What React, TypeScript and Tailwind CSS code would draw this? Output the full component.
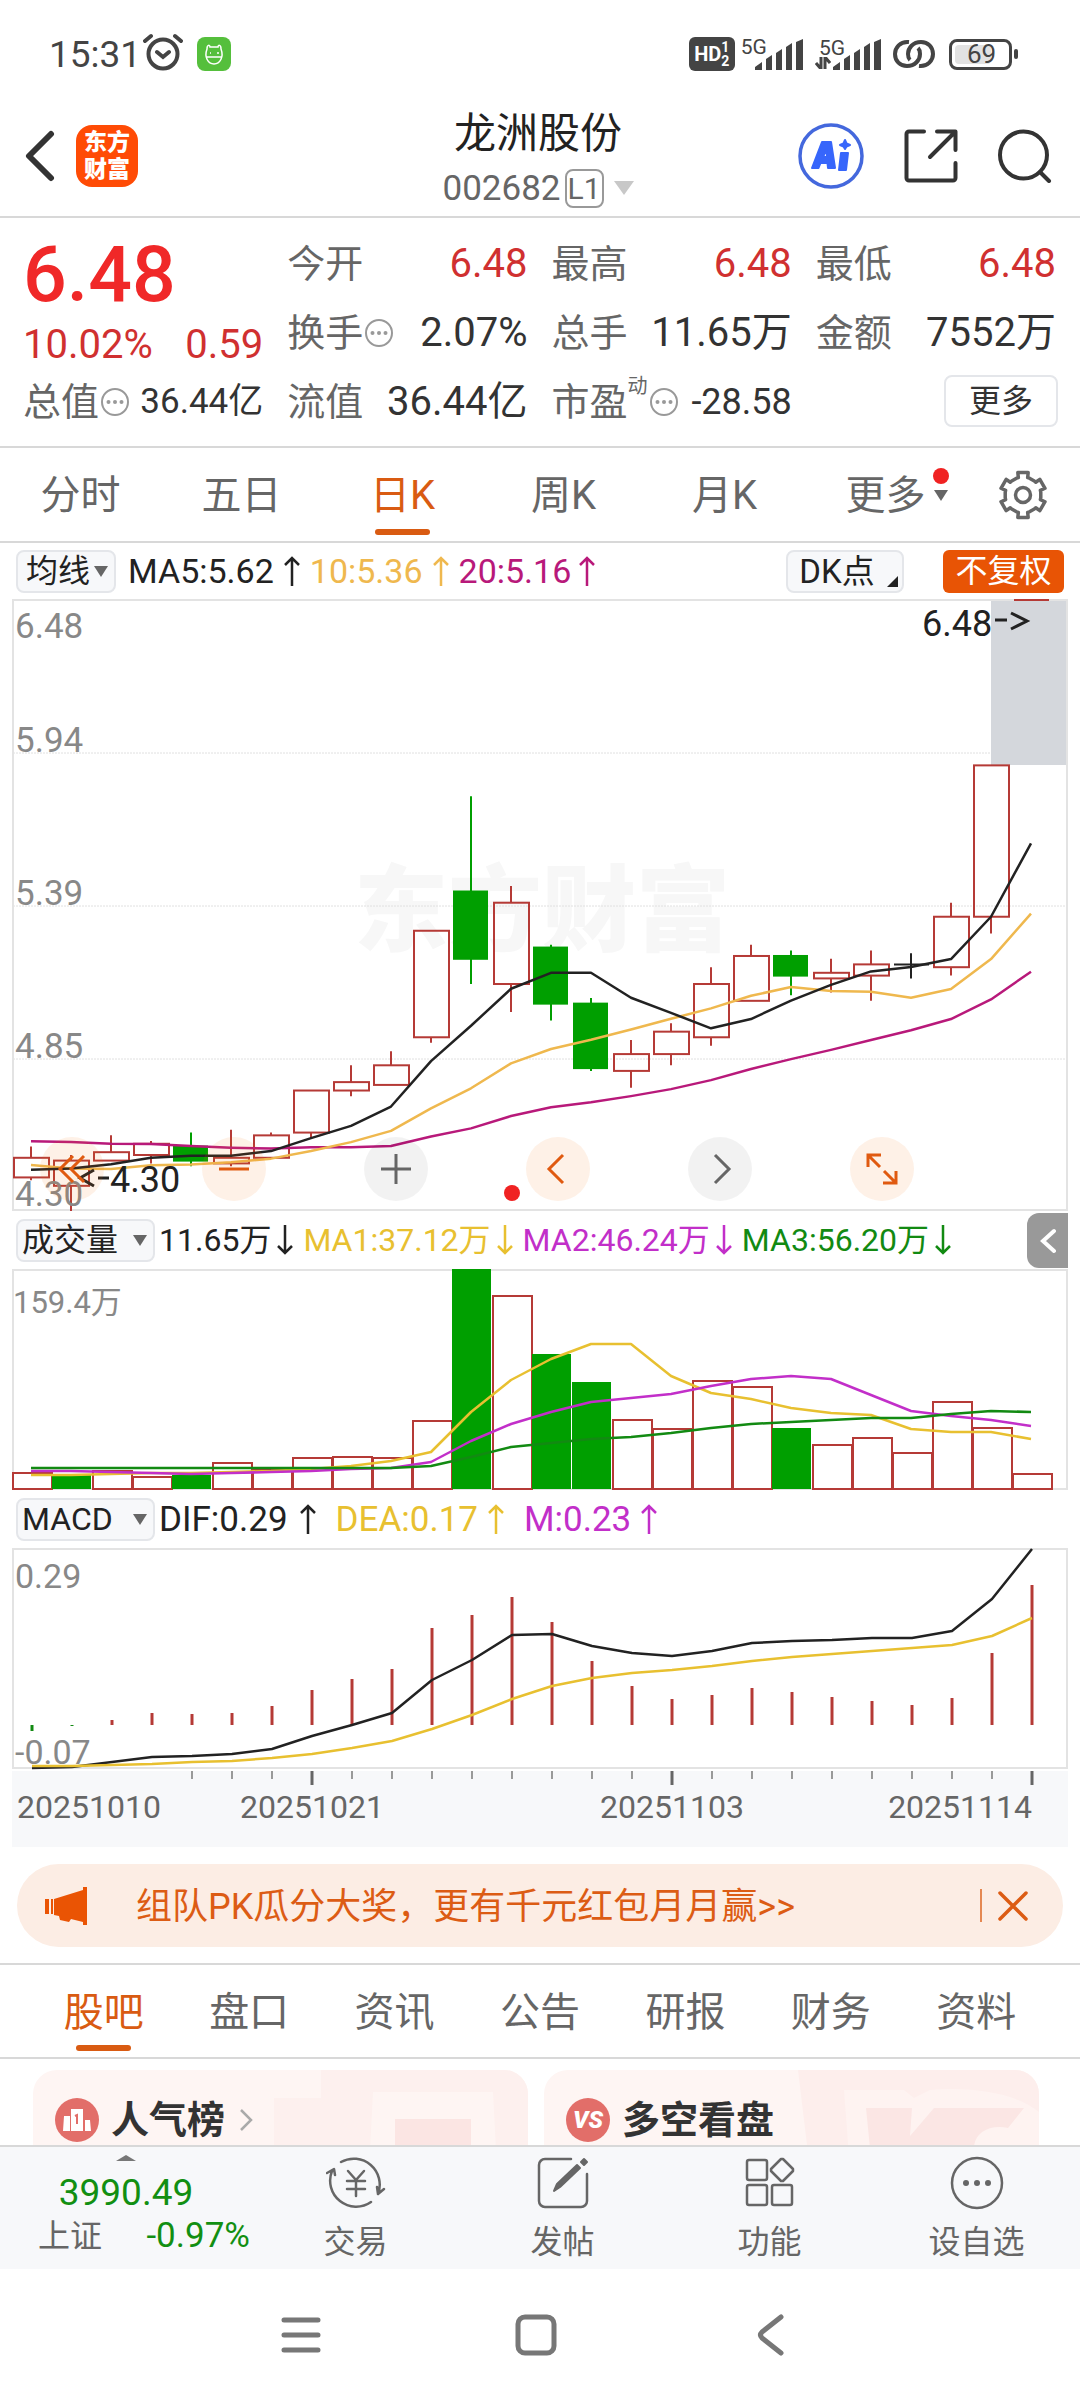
import { useState } from 'react'
import type { ReactNode } from 'react'
import { clsx } from 'clsx'

type Candle = [open: number, close: number, high: number, low: number]

// daily K data: open, close, high, low
const CANDLES: Candle[] = [
  [4.42, 4.49, 4.53, 4.41],
  [4.39, 4.48, 4.5, 4.3],
  [4.48, 4.51, 4.57, 4.48],
  [4.5, 4.54, 4.55, 4.47],
  [4.53, 4.48, 4.58, 4.46],
  [4.47, 4.49, 4.59, 4.46],
  [4.49, 4.57, 4.58, 4.49],
  [4.58, 4.73, 4.73, 4.56],
  [4.73, 4.76, 4.82, 4.71],
  [4.75, 4.82, 4.87, 4.75],
  [4.92, 5.3, 5.3, 4.9],
  [5.44, 5.2, 5.78, 5.11],
  [5.11, 5.4, 5.46, 5.01],
  [5.24, 5.04, 5.25, 4.98],
  [5.04, 4.81, 5.06, 4.8],
  [4.8, 4.86, 4.91, 4.74],
  [4.86, 4.94, 4.97, 4.82],
  [4.92, 5.11, 5.17, 4.89],
  [5.05, 5.21, 5.25, 5.05],
  [5.21, 5.14, 5.23, 5.07],
  [5.13, 5.15, 5.2, 5.08],
  [5.14, 5.18, 5.23, 5.05],
  [5.18, 5.18, 5.22, 5.13],
  [5.17, 5.35, 5.4, 5.14],
  [5.35, 5.89, 5.89, 5.29],
]

const MA5 = [4.447, 4.452, 4.467, 4.49, 4.497, 4.497, 4.514, 4.56, 4.604, 4.673, 4.835, 4.961, 5.093, 5.15, 5.15, 5.061, 5.007, 4.952, 4.985, 5.051, 5.107, 5.155, 5.171, 5.199, 5.35, 5.612]
const MA10 = [4.464, 4.452, 4.45, 4.463, 4.466, 4.474, 4.487, 4.514, 4.546, 4.586, 4.666, 4.738, 4.827, 4.878, 4.911, 4.948, 4.986, 5.023, 5.068, 5.099, 5.085, 5.082, 5.061, 5.092, 5.199, 5.361]
const MA20 = [4.549, 4.546, 4.54, 4.539, 4.532, 4.526, 4.523, 4.528, 4.528, 4.532, 4.566, 4.595, 4.639, 4.67, 4.688, 4.71, 4.735, 4.767, 4.807, 4.842, 4.875, 4.91, 4.945, 4.985, 5.055, 5.154]

const VOLUMES = [17, 14, 19, 13, 14, 27, 20, 32, 33, 32, 69, 220, 194, 135, 107, 70, 61, 109, 103, 61, 45, 52, 37, 88, 62, 16]
const VOL_MA1 = [206, 206, 205, 204, 204, 203, 202, 200, 197, 192, 183, 143, 111, 90, 75, 75, 107, 124, 130, 139, 144, 146, 160, 163, 163, 170]
const VOL_MA2 = [202, 202, 203, 204, 205, 204, 203, 202, 200, 199, 193, 172, 155, 143, 133, 129, 125, 117, 110, 107, 110, 126, 142, 147, 151, 157]
const VOL_MA3 = [199, 199, 199, 199, 199, 199, 199, 199, 199, 199, 197, 188, 178, 174, 170, 168, 164, 159, 155, 153, 151, 149, 149, 145, 142, 143]

const MACD = [-6, -1, 5, 12, 11, 12, 19, 35, 46, 56, 97, 110, 128, 103, 64, 39, 26, 30, 37, 33, 28, 24, 20, 27, 72, 140]
const DIF = [220, 219, 214, 209, 208, 206, 201, 188, 177, 165, 132, 112, 87, 86, 98, 105, 108, 103, 95, 93, 92, 90, 90, 83, 51, 1]
const DEA = [218, 218, 217, 216, 214, 213, 210, 206, 200, 193, 181, 167, 151, 138, 130, 125, 122, 118, 113, 109, 106, 103, 100, 97, 88, 70]

const STEP = 40
const RED = '#b53a36'
const GREEN = '#009f00'

const priceY = (p: number) => 1 + (6.48 - p) * 280.3
const centerX = (i: number) => 19 + i * STEP
const toPoints = (ys: number[], dx = 0) => ys.map((y, i) => `${centerX(i) + dx},${y}`).join(' ')

function Line({ ys, color, dx = 0 }: { ys: number[]; color: string; dx?: number }) {
  return <polyline points={toPoints(ys, dx)} fill="none" stroke={color} strokeWidth="2.5" strokeLinejoin="round" />
}

function Frame({ height }: { height: number }) {
  return <rect x="1" y="1" width="1054" height={height - 2} fill="none" stroke="#e3e3e3" strokeWidth="2" />
}

function KChart() {
  return (
    <svg viewBox="0 0 1056 612" className="block w-full overflow-visible">
      <text x="342" y="345" fontSize="94" fontWeight="900" fill="#f7f7f7">东方财富</text>
      {[154, 307, 460].map((y) => (
        <line key={y} x1="1" x2="1055" y1={y} y2={y} stroke="#e0e0e0" strokeWidth="1" strokeDasharray="2 1" />
      ))}
      <rect x="979" y="1" width="76" height="165" fill="#d4d7dc" />
      <Frame height={612} />
      {CANDLES.map(([open, close, high, low], i) => {
        const x = centerX(i)
        const top = priceY(Math.max(open, close))
        const bottom = priceY(Math.min(open, close))
        if (open === close) {
          return <path key={i} d={`M${x - 17} ${top}h35M${x} ${priceY(high)}V${priceY(low)}`} stroke="#222" strokeWidth="2" />
        }
        const down = close < open
        return (
          <g key={i} stroke={down ? GREEN : RED} strokeWidth="2" fill={down ? GREEN : 'none'}>
            <line x1={x} x2={x} y1={priceY(high)} y2={top} />
            <line x1={x} x2={x} y1={bottom} y2={priceY(low)} />
            <rect x={x - 17} y={top} width={down ? 33 : 35} height={bottom - top} />
          </g>
        )
      })}
      <line x1="1002" x2="1037" y1="1" y2="1" stroke={RED} strokeWidth="2" />
      <Line ys={MA20.map(priceY)} color="#b8197a" />
      <Line ys={MA10.map(priceY)} color="#efb84e" />
      <Line ys={MA5.map(priceY)} color="#222" />
      <g fontSize="35" fill="#888">
        <text x="3" y="39">6.48</text>
        <text x="3" y="153">5.94</text>
        <text x="3" y="306">5.39</text>
        <text x="3" y="459">4.85</text>
        <text x="3" y="607">4.30</text>
      </g>
      <g fontSize="36" fill="#222">
        <text x="910" y="37">6.48</text>
        <text x="98" y="593">4.30</text>
      </g>
      <path d="M983 21h12M999 14l16 8l-16 8M86 579h11M82 571l-14 8l14 8" fill="none" stroke="#222" strokeWidth="3" />
      <circle cx="500" cy="594" r="8" fill="#f02222" />
    </svg>
  )
}

function VolumeChart() {
  return (
    <svg viewBox="0 0 1056 221" className="block w-full">
      <Frame height={221} />
      {VOLUMES.map((v, i) => {
        const down = i === 1 || i === 4 || i === 11 || i === 13 || i === 14 || i === 19
        return down ? (
          <rect key={i} x={i * STEP} y={220 - v} width="39" height={v} fill={GREEN} />
        ) : (
          <rect key={i} x={i * STEP + 1} y={221 - v} width="39" height={v - 1} fill="none" stroke={RED} strokeWidth="2" />
        )
      })}
      <Line ys={VOL_MA1} color="#e8c030" />
      <Line ys={VOL_MA2} color="#c22fc9" />
      <Line ys={VOL_MA3} color="#128a12" />
      <text x="1" y="44" fontSize="31" fill="#888">159.4万</text>
    </svg>
  )
}

function MacdChart() {
  return (
    <svg viewBox="0 0 1056 221" className="block w-full overflow-visible">
      <Frame height={221} />
      <g fontSize="34" fill="#888">
        <text x="3" y="40">0.29</text>
        <text x="3" y="216">-0.07</text>
      </g>
      {MACD.map((v, i) => (
        <line key={i} x1={centerX(i) + 1} x2={centerX(i) + 1} y1="177" y2={177 - v} stroke={v < 0 ? '#128a12' : RED} strokeWidth="3" />
      ))}
      <Line ys={DIF} color="#222" dx={1} />
      <Line ys={DEA} color="#e8c030" dx={1} />
    </svg>
  )
}

function DateAxis() {
  const ticks = Array.from({ length: 22 }, (_, k) => k + 4)
  return (
    <svg viewBox="0 0 1056 78" className="block w-full">
      <rect y="2" width="1056" height="76" fill="#f7f8fa" />
      {ticks.map((i) => {
        const major = i % 9 === 7
        return (
          <line key={i} x1={centerX(i) + 1} x2={centerX(i) + 1} y1="2" y2={major ? 16 : 10} stroke={major ? '#666' : '#999'} strokeWidth={major ? 3 : 2} />
        )
      })}
      <g fontSize="32" fill="#666">
        <text x="5" y="49">20251010</text>
        <text x="300" y="49" textAnchor="middle">20251021</text>
        <text x="660" y="49" textAnchor="middle">20251103</text>
        <text x="1020" y="49" textAnchor="end">20251114</text>
      </g>
    </svg>
  )
}

function Arrow({ down = false }: { down?: boolean }) {
  return (
    <svg viewBox="0 0 16 32" className={clsx('h-8 w-4 shrink-0', down && 'rotate-180')} fill="none" stroke="currentColor" strokeWidth="2.5">
      <path d="M8 31V3M1 10l7-7l7 7" />
    </svg>
  )
}

function Triangle({ className }: { className?: string }) {
  return (
    <svg viewBox="0 0 14 11" preserveAspectRatio="none" className={className} fill="currentColor">
      <path d="M0 0h14l-7 11z" />
    </svg>
  )
}

function MoreDots() {
  return (
    <svg viewBox="0 0 28 28" className="ml-0.5 size-7 shrink-0">
      <circle cx="14" cy="14" r="13" fill="none" stroke="#999" strokeWidth="2" />
      <g fill="#999">
        <circle cx="7.5" cy="14" r="2" />
        <circle cx="14" cy="14" r="2" />
        <circle cx="20.5" cy="14" r="2" />
      </g>
    </svg>
  )
}

function Picker({ label, options, className, arrow }: { label: string; options: string[]; className: string; arrow: string }) {
  return (
    <div className="relative shrink-0">
      <select
        aria-label={label}
        className={clsx('block h-[43px] appearance-none rounded-lg border-2 border-[#e4e6ea] bg-[#f7f8fa] text-[32px] leading-9 text-[#222]', className)}
      >
        {options.map((o) => (
          <option key={o}>{o}</option>
        ))}
      </select>
      <Triangle className={clsx('pointer-events-none absolute top-4 h-[11px] w-3.5 text-[#666]', arrow)} />
    </div>
  )
}

function Indicator({ text, className, down }: { text: string; className: string; down?: boolean }) {
  return (
    <span className={clsx('flex items-center whitespace-nowrap', className)}>
      {text}
      <Arrow down={down} />
    </span>
  )
}

function Signal() {
  return (
    <svg viewBox="0 0 48 31" className="h-[31px] w-12" fill="#444">
      <path d="M0 31v-3l7-5v8zM11 31V20l6-4v15zM21 31V14l6-4v21zM31 31V8l6-4v27zM41 31V3l7-3v31z" />
    </svg>
  )
}

function StatusBar() {
  return (
    <div className="flex h-24 items-center justify-between pt-3 pr-[62px] pl-[49px] text-[#444]">
      <div className="flex items-center">
        <span className="text-[37px] leading-none">15:31</span>
        <svg viewBox="0 0 40 38" className="-mt-1 ml-0.5 h-[38px] w-10" fill="none" stroke="#444" strokeWidth="4" strokeLinecap="round">
          <circle cx="20" cy="21" r="14.5" />
          <path d="M14 19l6 5l6-5M2 8l6-5M38 8l-6-5" />
        </svg>
        <svg viewBox="0 0 34 34" className="ml-3.5 size-[34px]">
          <rect width="34" height="34" rx="8" fill="#55bf3c" />
          <path d="M10 12c0-5 3-4 3-2h8c0-2 3-3 3 2c3 8-1 15-7 15s-10-7-7-15zM9 20h16M13 16h1M20 16h2" fill="none" stroke="#fff" strokeWidth="1.5" />
        </svg>
      </div>
      <div className="flex items-center">
        <div className="flex h-[34px] w-[46px] items-center justify-center rounded-md bg-[#444] text-white">
          <span className="text-[20px] leading-none font-bold">HD</span>
          <span className="flex flex-col text-[14px] leading-[14px] font-bold">
            <span>1</span>
            <span>2</span>
          </span>
        </div>
        <span className="-mr-3 ml-1.5 self-start text-[21px] leading-none">5G</span>
        <Signal />
        <div className="ml-3 flex flex-col items-start">
          <span className="ml-1 text-[21px] leading-[18px]">5G</span>
          <svg viewBox="0 0 16 12" className="h-3 w-4" fill="none" stroke="#444" strokeWidth="3">
            <path d="M6 0v12L1 6M10 12V0l5 6" />
          </svg>
        </div>
        <div className="-ml-3">
          <Signal />
        </div>
        <svg viewBox="0 0 42 30" className="ml-3 h-[30px] w-[42px]" fill="none" stroke="#444" strokeWidth="4">
          <path d="M16 3C7 2 2 9 2 15c0 7 5 12 12 12c8 0 13-6 13-12c0-2 0-4-2-6" />
          <path d="M26 27c9 1 14-6 14-12c0-7-5-12-12-12c-8 0-13 6-13 12c0 2 0 4 2 6" />
        </svg>
        <div className="ml-3.5 flex items-center">
          <div className="flex h-[31px] w-[63px] items-center rounded-lg border-3 border-[#444] p-[3px]">
            <div className="h-full w-9 rounded-sm bg-[#e2e2e2]" />
            <span className="-ml-6 text-[26px] leading-none">69</span>
          </div>
          <div className="ml-0.5 h-2.5 w-1 rounded-sm bg-[#444]" />
        </div>
      </div>
    </div>
  )
}

function Header() {
  return (
    <header className="grid h-[122px] grid-cols-[1fr_auto_1fr] items-center border-b-2 border-[#d8d8d8] pr-7 pl-6">
      <div className="flex items-center gap-5">
        <button aria-label="返回">
          <svg viewBox="0 0 32 52" className="block h-[52px] w-8" fill="none" stroke="#333" strokeWidth="6" strokeLinecap="round" strokeLinejoin="round">
            <path d="M27 4L5 26l22 22" />
          </svg>
        </button>
        <div className="flex size-[62px] flex-col items-center justify-center rounded-2xl bg-[#ff4b05] text-[23px] leading-[27px] font-black text-white">
          <span>东方</span>
          <span>财富</span>
        </div>
      </div>
      <div className="mt-2.5 flex flex-col items-center">
        <h1 className="text-[42px] leading-[54px] text-[#222]">龙洲股份</h1>
        <div className="flex h-[54px] items-center text-[35px] leading-none text-[#666]">
          002682
          <span className="ml-1 rounded-lg border-2 border-[#999] px-px text-[30px] leading-[35px]">L1</span>
          <Triangle className="ml-2.5 h-3.5 w-5 text-[#c8c8c8]" />
        </div>
      </div>
      <div className="flex items-center justify-end gap-10">
        <button aria-label="AI">
          <svg viewBox="0 0 66 66" className="block size-[66px]">
            <circle cx="33" cy="33" r="31" fill="none" stroke="#4468dd" strokeWidth="3.5" />
            <g fill="#3766fb" stroke="#3766fb" strokeLinejoin="round" strokeWidth="2">
              <path d="M14 45L24 19h9l4 26h-7l-.5-5h-7l-2 5zM25 34h4l-.5-8z" fillRule="evenodd" />
              <path d="M43 30h7l-2 17h-7z" />
              <path d="M47 17l1.5 3.5L52 22l-3.5 1.5L47 26l-1.5-2.5L42 22l3.5-1.5z" />
            </g>
          </svg>
        </button>
        <button aria-label="分享">
          <svg viewBox="0 0 54 54" className="block size-[54px]" fill="none" stroke="#333" strokeWidth="4" strokeLinecap="round" strokeLinejoin="round">
            <path d="M20 2.5H5a2.500 2.500 0 0 0-2.500 2.500v44a2.500 2.500 0 0 0 2.500 2.500h44a2.500 2.500 0 0 0 2.500-2.500V34M33 2.500h18.500V21M51 3L26 28" />
          </svg>
        </button>
        <button aria-label="搜索">
          <svg viewBox="0 0 54 54" className="block size-[54px]" fill="none" stroke="#333" strokeWidth="4" strokeLinecap="round">
            <circle cx="25.5" cy="26" r="23.5" />
            <path d="M42 43l9 9" />
          </svg>
        </button>
      </div>
    </header>
  )
}

function Stat({ label, value, red, dots }: { label: string; value: string; red?: boolean; dots?: boolean }) {
  return (
    <div className="flex h-[69px] items-center justify-between pt-0.5 whitespace-nowrap">
      <span className="flex items-center text-[38px] text-[#666]">
        {label}
        {dots && <MoreDots />}
      </span>
      <span className={clsx('text-[40px]', red ? 'text-[#d03030]' : 'text-[#333]')}>{value}</span>
    </div>
  )
}

function Quote() {
  return (
    <section className="grid grid-cols-4 gap-x-6 border-b-2 border-[#d8d8d8] pt-2.5 pr-6 pb-[11px] pl-[23px] leading-none">
      <div>
        <div className="flex h-[94px] items-center text-[77px] font-medium text-[#f02828]">6.48</div>
        <div className="flex h-11 items-center justify-between pt-0.5 text-[40px] text-[#d03030]">
          <span>10.02%</span>
          <span>0.59</span>
        </div>
        <div className="flex h-[69px] items-center justify-between pt-0.5 whitespace-nowrap">
          <span className="flex items-center text-[38px] text-[#666]">
            总值
            <MoreDots />
          </span>
          <span className="text-[35px] text-[#333]">36.44亿</span>
        </div>
      </div>
      <div>
        <Stat label="今开" value="6.48" red />
        <Stat label="换手" value="2.07%" dots />
        <Stat label="流值" value="36.44亿" />
      </div>
      <div>
        <Stat label="最高" value="6.48" red />
        <Stat label="总手" value="11.65万" />
        <div className="flex h-[69px] items-center justify-between pt-0.5 whitespace-nowrap">
          <span className="flex items-center text-[38px] text-[#666]">
            市盈
            <span className="mb-8 text-[20px]">动</span>
            <MoreDots />
          </span>
          <span className="text-[36px] text-[#333]">-28.58</span>
        </div>
      </div>
      <div>
        <Stat label="最低" value="6.48" red />
        <Stat label="金额" value="7552万" />
        <div className="flex h-[69px] items-center justify-end">
          <button className="-mr-0.5 h-[52px] w-[114px] rounded-lg border-2 border-[#e4e6ea] text-[32px] text-[#333]">更多</button>
        </div>
      </div>
    </section>
  )
}

// six teeth, first one pointing up
const GEAR = Array.from({ length: 6 }, (_, k) => k * 60)
  .flatMap((a) => [[a - 21, 18], [a - 15, 18], [a - 13, 23], [a + 13, 23], [a + 15, 18], [a + 21, 18]])
  .map(([deg, r]) => `${24 + r * Math.sin((deg * Math.PI) / 180)},${25 - r * Math.cos((deg * Math.PI) / 180)}`)
  .join(' ')

function PeriodTabs() {
  const [active, setActive] = useState('日K')
  return (
    <nav className="flex h-[95px] border-b-2 border-[#d8d8d8] text-[40px] leading-none text-[#666]">
      {['分时', '五日', '日K', '周K', '月K', '更多'].map((tab) => (
        <button
          key={tab}
          onClick={() => setActive(tab)}
          className={clsx('relative flex flex-1 items-center justify-center pt-[3px]', tab === active && 'text-[#d95b12]')}
        >
          {tab}
          {tab === active && <span className="absolute bottom-1.5 h-1.5 w-[55px] rounded-full bg-[#d95b12]" />}
          {tab === '更多' && (
            <span className="absolute top-5 right-[17px] flex flex-col items-center gap-1.5">
              <span className="size-4 rounded-full bg-[#f02222]" />
              <Triangle className="h-[11px] w-3.5" />
            </span>
          )}
        </button>
      ))}
      <button aria-label="设置" className="flex w-[114px] items-center justify-center">
        <svg viewBox="0 0 48 50" className="h-[50px] w-12" fill="none" stroke="#666" strokeWidth="3.5" strokeLinejoin="round">
          <polygon points={GEAR} />
          <circle cx="24" cy="25" r="7.5" />
        </svg>
      </button>
    </nav>
  )
}

function ToolButton({ label, gray, children }: { label: string; gray?: boolean; children: ReactNode }) {
  return (
    <button
      aria-label={label}
      className={clsx('flex size-16 items-center justify-center rounded-full', gray ? 'bg-[#000]/5 text-[#666]' : 'bg-[#f97316]/10 text-[#e05a10]')}
    >
      <svg viewBox="0 0 32 32" className="size-8" fill="none" stroke="currentColor" strokeWidth="3">
        {children}
      </svg>
    </button>
  )
}

function Charts() {
  return (
    <section className="px-3">
      <div className="flex h-14 items-center pl-1 text-[34px] leading-none">
        <Picker label="均线" options={['均线']} className="w-[100px] pl-2" arrow="right-2" />
        <Indicator text="MA5:5.62" className="ml-3 gap-2.5 text-[#222]" />
        <Indicator text="10:5.36" className="ml-2.5 gap-2.5 text-[#efb84e]" />
        <Indicator text="20:5.16" className="ml-2.5 gap-2 text-[#b8197a]" />
        <button className="relative ml-auto h-[43px] w-[118px] rounded-lg border-2 border-[#e4e6ea] bg-[#f7f8fa] pr-4 text-[33px] text-[#222]">
          DK点
          <svg viewBox="0 0 12 12" className="absolute right-1 bottom-1 size-[11px]" fill="#222">
            <path d="M12 0v12H0z" />
          </svg>
        </button>
        <button className="mr-1 ml-[39px] h-[43px] w-[121px] rounded-md bg-[#e85405] text-[32px] text-white">不复权</button>
      </div>
      <div className="relative">
        <KChart />
        <div className="absolute right-[154px] bottom-2.5 left-7 flex justify-between">
          <ToolButton label="最左">
            <path d="M17 3L4 16l13 13M28 3L15 16l13 13" />
          </ToolButton>
          <ToolButton label="缩小">
            <path d="M1 16h30" />
          </ToolButton>
          <ToolButton label="放大" gray>
            <path d="M1 16h30M16 1v30" />
          </ToolButton>
          <ToolButton label="左移">
            <path d="M21 2L7 16l14 14" />
          </ToolButton>
          <ToolButton label="右移" gray>
            <path d="M11 2l14 14l-14 14" />
          </ToolButton>
          <ToolButton label="全屏">
            <path d="M2 14V2h13M2 2l12 12M30 18v12H17M30 30L18 18" />
          </ToolButton>
        </div>
      </div>
      <div className="relative flex h-[58px] items-center pl-1 text-[32px] leading-none">
        <Picker label="成交量" options={['成交量']} className="w-[139px] pl-1" arrow="right-2" />
        <Indicator text="11.65万" className="ml-1 gap-1.5 text-[#222]" down />
        <Indicator text="MA1:37.12万" className="ml-2.5 gap-1.5 text-[#e8c030]" down />
        <Indicator text="MA2:46.24万" className="ml-2.5 gap-1.5 text-[#c22fc9]" down />
        <Indicator text="MA3:56.20万" className="ml-2.5 gap-1.5 text-[#128a12]" down />
        <button aria-label="展开" className="absolute top-0.5 right-0 flex h-[55px] w-[41px] items-center justify-center rounded-l-xl bg-[#999]">
          <svg viewBox="0 0 16 26" className="h-[26px] w-4" fill="none" stroke="#fff" strokeWidth="4" strokeLinecap="round">
            <path d="M14 3L3 13l11 10" />
          </svg>
        </button>
      </div>
      <VolumeChart />
      <div className="flex h-[58px] items-center pl-1 text-[35px] leading-none">
        <Picker label="指标" options={['MACD']} className="w-[139px] pl-1" arrow="right-2" />
        <Indicator text="DIF:0.29" className="ml-1 gap-3 text-[#222]" />
        <Indicator text="DEA:0.17" className="ml-5 gap-2.5 text-[#e8c030]" />
        <Indicator text="M:0.23" className="ml-5 gap-2.5 text-[#c22fc9]" />
      </div>
      <MacdChart />
      <DateAxis />
    </section>
  )
}

function Banner() {
  return (
    <div className="mx-[17px] mt-[17px] mb-4 flex h-[83px] items-center rounded-full bg-[#fcede4] pr-[35px] pl-7 text-[#dc5c14]">
      <svg viewBox="0 0 42 38" className="h-[38px] w-[42px]" fill="#ea5404">
        <path d="M0 12h4v15H0zM6 12h2v15H6zM9 12L38 3V0h4v38h-4v-3l-12-3l-2 3l-9-2l-1-4l-5-1z" />
      </svg>
      <a href="#activity" className="ml-[49px] pt-0.5 text-[36px] leading-none whitespace-nowrap">
        组队PK瓜分大奖，更有千元红包月月赢&gt;&gt;
      </a>
      <span className="ml-auto h-[33px] w-0.5 bg-[#dc5c14]/70" />
      <button aria-label="关闭" className="ml-4">
        <svg viewBox="0 0 30 30" className="block size-[30px]" fill="none" stroke="currentColor" strokeWidth="3.5" strokeLinecap="round">
          <path d="M2 2l26 26M28 2L2 28" />
        </svg>
      </button>
    </div>
  )
}

function SectionTabs() {
  const [active, setActive] = useState('股吧')
  return (
    <nav className="flex h-24 border-y-2 border-[#d8d8d8] px-[31px] text-[40px] leading-none text-[#666]">
      {['股吧', '盘口', '资讯', '公告', '研报', '财务', '资料'].map((tab) => (
        <button
          key={tab}
          onClick={() => setActive(tab)}
          className={clsx('relative flex flex-1 items-center justify-center pt-[3px]', tab === active && 'text-[#d95b12]')}
        >
          {tab}
          {tab === active && <span className="absolute bottom-1.5 h-1.5 w-[55px] rounded-full bg-[#d95b12]" />}
        </button>
      ))}
    </nav>
  )
}

function Cards() {
  return (
    <section className="grid h-[86px] grid-cols-2 gap-4 overflow-hidden pt-[11px] pr-[41px] pl-[33px] text-[38px] leading-none font-bold text-[#333]">
      <div className="relative flex h-[100px] items-center overflow-hidden rounded-3xl bg-[#fef5f3] px-[22px]">
        <svg viewBox="0 0 495 100" className="absolute inset-0 size-full">
          <path d="M288 0h207v100H241V28h47z" fill="#fdf0ee" />
          <path d="M340 22h120l4 78H336z" fill="#fef5f3" />
          <path d="M362 49h76v51h-76z" fill="#fbe5e3" />
        </svg>
        <svg viewBox="0 0 44 44" className="relative size-11">
          <circle cx="22" cy="22" r="22" fill="#e26e69" />
          <path d="M16 11h12v22H16zM9 18h6v15H8zM30 22h5l1 11h-6z" fill="#fff" />
          <path d="M20 18l2-1v9" fill="none" stroke="#e26e69" strokeWidth="2" />
        </svg>
        <h2 className="relative ml-3">人气榜</h2>
        <svg viewBox="0 0 14 22" className="relative ml-3.5 h-[22px] w-3.5" fill="none" stroke="#aaa" strokeWidth="2.5">
          <path d="M2 1l10 10L2 21" />
        </svg>
      </div>
      <div className="relative flex h-[100px] items-center overflow-hidden rounded-3xl bg-[#fef5f3] px-[22px]">
        <svg viewBox="0 0 495 100" className="absolute inset-0 size-full">
          <path d="M254 0h241v100H266z" fill="#fdeeec" />
          <path d="M300 20h60l10 8l16-8c50-4 90 6 109 22v58H306z" fill="#fef3f1" />
          <path d="M322 38h46l-2 28l24-28h90l-16 20c-20-4-34 6-34 20H326z" fill="#fbe6e4" />
        </svg>
        <div className="relative flex size-11 items-center justify-center rounded-full bg-[#e26e69] text-[24px] font-black text-white italic">VS</div>
        <h2 className="relative ml-3">多空看盘</h2>
      </div>
    </section>
  )
}

function BarItem({ label, children }: { label: string; children: ReactNode }) {
  return (
    <button className="flex flex-col items-center pt-1.5 text-[32px] leading-[58px] text-[#666]">
      <svg viewBox="0 0 60 60" className="size-[60px]" fill="none" stroke="#666" strokeWidth="2.5" strokeLinecap="round" strokeLinejoin="round">
        {children}
      </svg>
      {label}
    </button>
  )
}

function BottomBar() {
  return (
    <footer className="grid h-[124px] grid-cols-[252fr_207fr_207fr_207fr_207fr] border-t-2 border-[#d8d8d8] bg-[#f7f8fa]">
      <button className="flex flex-col items-center pt-2 leading-none">
        <Triangle className="h-1.5 w-5 rotate-180 text-[#777]" />
        <span className="mt-3 text-[37px] leading-10 text-[#128f12]">3990.49</span>
        <span className="flex w-full items-center justify-between pr-0.5 pl-[38px] leading-[46px]">
          <span className="text-[32px] text-[#666]">上证</span>
          <span className="text-[35px] text-[#128f12]">-0.97%</span>
        </span>
      </button>
      <BarItem label="交易">
        <path d="M15 9a26 26 0 0 1 37 32M45 49A26 26 0 0 1 6 18M1 20l7-4l1 6M58 36l-6 5l-1-7" />
        <path d="M22 18l8 9l8-9M30 27v16M21 28h18M21 36h18" />
      </BarItem>
      <BarItem label="发帖">
        <path d="M38 6H12a6 6 0 0 0-6 6v36a6 6 0 0 0 6 6h36a6 6 0 0 0 6-6V21" />
        <path d="M21 38l3-7l20-19l3 3l-20 19zM48 9l3-3l3 3l-3 3z" fill="#666" strokeWidth="2" />
      </BarItem>
      <BarItem label="功能">
        <rect x="7" y="7" width="20" height="20" rx="2" />
        <rect x="7" y="32" width="20" height="20" rx="2" />
        <rect x="32" y="32" width="20" height="20" rx="2" />
        <path d="M41 6l2 0l10 10v2l-10 10h-2L31 18v-2z" />
      </BarItem>
      <BarItem label="设自选">
        <circle cx="30" cy="30" r="25" />
        <g fill="#666" stroke="none">
          <circle cx="19" cy="30" r="3" />
          <circle cx="30" cy="30" r="3" />
          <circle cx="41" cy="30" r="3" />
        </g>
      </BarItem>
    </footer>
  )
}

function SystemNav() {
  return (
    <div className="flex h-[131px] items-center justify-center gap-[191px] pr-2">
      <button aria-label="最近任务">
        <svg viewBox="0 0 44 44" className="block size-11" stroke="#777" strokeWidth="5" strokeLinecap="round">
          <path d="M5 7h34M5 22h34M5 37h34" />
        </svg>
      </button>
      <button aria-label="主页">
        <svg viewBox="0 0 44 44" className="block size-11" fill="none" stroke="#777" strokeWidth="5">
          <rect x="4" y="4" width="36" height="36" rx="7" />
        </svg>
      </button>
      <button aria-label="返回">
        <svg viewBox="0 0 44 44" className="block size-11" fill="none" stroke="#777" strokeWidth="5" strokeLinecap="round" strokeLinejoin="round">
          <path d="M32 4L13 19q-3 3 0 6l19 15" />
        </svg>
      </button>
    </div>
  )
}

export default function App() {
  return (
    <div className="min-h-screen bg-white [font-family:Roboto,'Noto_Sans_CJK_SC',sans-serif]">
      <StatusBar />
      <Header />
      <Quote />
      <PeriodTabs />
      <Charts />
      <Banner />
      <SectionTabs />
      <Cards />
      <BottomBar />
      <SystemNav />
    </div>
  )
}
